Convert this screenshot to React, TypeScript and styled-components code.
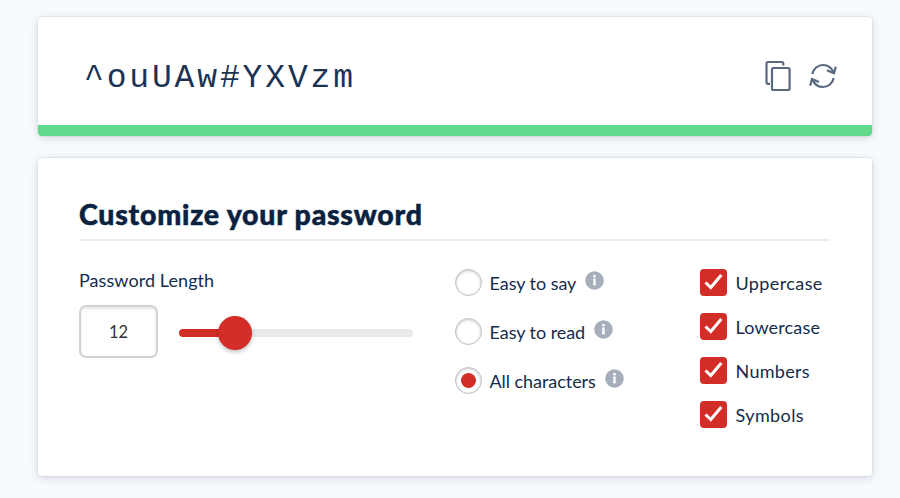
import React, { useState } from "react";
import styled, { createGlobalStyle, css } from "styled-components";

const GlobalStyle = createGlobalStyle`
  *, *::before, *::after { box-sizing: border-box; }
  body {
    margin: 0;
    background: #f7fbff;
    color: #142c4c;
    font-family: Lato, "Open Sans", sans-serif;
    -webkit-font-smoothing: antialiased;
  }
`;

const Page = styled.main`
  display: flex;
  flex-direction: column;
  gap: 22px;
  height: 498px;
  padding: 17px 28px 22px 38px;
  overflow: hidden;
`;

const cardSurface = css`
  background: #fff;
  border-radius: 4px;
  box-shadow: 0 0 0 1px rgba(0, 0, 0, 0.04), 0 2px 10px rgba(0, 0, 0, 0.15);
`;

const ResultCard = styled.section`
  ${cardSurface}
  display: flex;
  flex-direction: column;
  height: 119px;
  overflow: hidden;
`;

const ResultRow = styled.div`
  display: flex;
  align-items: center;
  justify-content: space-between;
  flex: 1;
  padding: 10px 35.500px 0 46px;
`;

const Password = styled.output`
  padding-top: 5px;
  font: 400 33px/40px "Liberation Mono", monospace;
  letter-spacing: 2.850px;
  color: #1b3354;
`;

const Strength = styled.div`
  height: 11px;
  background: #5fd98a;
`;

const Actions = styled.div`
  display: flex;
  align-items: center;
  gap: 17px;
`;

const IconButton = styled.button`
  display: flex;
  padding: 0;
  border: 0;
  background: none;
  color: #59697f;
`;

const OptionsCard = styled.section`
  ${cardSurface}
  height: 318px;
  padding: 37px 42px 0 41px;
`;

const Title = styled.h1`
  height: 46px;
  margin: 0;
  border-bottom: 2px solid #ececec;
  color: #0a2240;
  font-size: 28.5px;
  font-weight: 900;
  line-height: 38px;
  letter-spacing: 0.75px;
  white-space: nowrap;
  -webkit-text-stroke: 0.5px #0a2240;
`;

const Columns = styled.div`
  display: grid;
  grid-template-columns: 375.500px 245.500px 1fr;
`;

const LengthColumn = styled.div`
  padding-top: 27px;
`;

const Label = styled.span<{ $spacing?: number }>`
  font-size: 18px;
  line-height: 24px;
  letter-spacing: ${(p) => p.$spacing ?? 0}px;
  white-space: nowrap;
`;

const LengthRow = styled.div`
  display: flex;
  align-items: center;
  gap: 21px;
  margin-top: 13px;
`;

const LengthInput = styled.input`
  width: 79px;
  height: 53px;
  padding: 0;
  border: 2px solid #d2d2d2;
  border-radius: 7px;
  box-shadow: inset 0 2px 3px rgba(0, 0, 0, 0.1);
  color: #333;
  font: 400 16.500px Lato, sans-serif;
  text-align: center;
`;

const Slider = styled.div`
  display: flex;
  align-items: center;
  width: 234px;
  height: 34px;
  margin-top: 2px;
`;

const Fill = styled.div`
  width: 48px;
  height: 8px;
  margin-right: -9px;
  border-radius: 4px 0 0 4px;
  background: #d32d27;
`;

const Thumb = styled.div`
  z-index: 1;
  width: 34px;
  height: 34px;
  border-radius: 50%;
  background: #d32d27;
  box-shadow: 0 2px 4px rgba(0, 0, 0, 0.25);
`;

const Rest = styled.div`
  flex: 1;
  height: 8px;
  margin-left: -9px;
  border-radius: 0 4px 4px 0;
  background: #e9e9e9;
`;

const RadioColumn = styled.div`
  display: flex;
  flex-direction: column;
  gap: 22px;
  padding-top: 28px;
`;

const CheckColumn = styled.div`
  display: flex;
  flex-direction: column;
  gap: 17px;
  padding-top: 28px;
`;

const Option = styled.label<{ $gap: number }>`
  display: flex;
  align-items: center;
  gap: ${(p) => p.$gap}px;
  height: 27px;
`;

const Radio = styled.span<{ $checked: boolean }>`
  display: grid;
  place-items: center;
  width: 27px;
  height: 27px;
  border: 1.5px solid #b9bdc2;
  border-radius: 50%;
  box-shadow: inset 0 1px 3px rgba(0, 0, 0, 0.22);

  &::after {
    content: "";
    width: 15px;
    height: 15px;
    border-radius: 50%;
    background: ${(p) => (p.$checked ? "#d32d27" : "transparent")};
  }
`;

const CheckBox = styled.span`
  display: grid;
  place-items: center;
  width: 26.500px;
  height: 26.500px;
  border-radius: 4px;
  background: #d32d27;
`;

const Info = styled.svg`
  width: 19px;
  height: 19px;
  margin: -4px 0 0 1px;
`;

const HiddenInput = styled.input`
  position: absolute;
  opacity: 0;
  pointer-events: none;
`;

const CopyIcon = () => (
  <svg width="28" height="32" viewBox="0 0 28 32" fill="none" stroke="currentColor" strokeWidth="2.200">
    <path d="M19.300 5.500V3.500Q19.300 2 17.800 2H4Q2.500 2 2.500 3.500V22.300Q2.500 23.800 4 23.800H6" />
    <rect x="8" y="8" width="17.600" height="22" rx="1.500" />
  </svg>
);

const RefreshIcon = () => (
  <svg width="28" height="26" viewBox="0 0 28 26" fill="none" stroke="currentColor" strokeWidth="2.200">
    <path d="M3.300 11C4.400 5.600 8.800 2 14 2C19 2 22.700 5 24.500 9.500" />
    <path d="M26.800 3.800L25 10.300L18 7.300" />
    <path d="M24.700 15C23.600 20.400 19.200 24 14 24C9 24 5.300 21 3.500 16.500" />
    <path d="M1.200 22.800L3 15.900L10 18.900" />
  </svg>
);

const InfoIcon = () => (
  <Info viewBox="0 0 19 19">
    <circle cx="9.500" cy="9.500" r="9.300" fill="#a7aebb" />
    <circle cx="9.500" cy="5.200" r="1.350" fill="#fff" />
    <path d="M8 7.500H10.600V13H11V14.200H8V13H8.300V8.700H8Z" fill="#fff" />
  </Info>
);

const CheckIcon = () => (
  <svg width="27" height="27" viewBox="0 0 27 27" fill="none">
    <path d="M5.500 13.500L10.800 18.500L21.300 6" stroke="#fff" strokeWidth="3" />
  </svg>
);

const modes = ["Easy to say", "Easy to read", "All characters"];

const characterSets = [
  { name: "Uppercase", spacing: 0.4 },
  { name: "Lowercase", spacing: 0.15 },
  { name: "Numbers", spacing: 0.3 },
  { name: "Symbols", spacing: 0.4 },
];

export default function App() {
  const [mode, setMode] = useState("All characters");
  return (
    <>
      <GlobalStyle />
      <Page>
        <ResultCard>
          <ResultRow>
            <Password>^ouUAw#YXVzm</Password>
            <Actions>
              <IconButton aria-label="Copy password"><CopyIcon /></IconButton>
              <IconButton aria-label="Generate password"><RefreshIcon /></IconButton>
            </Actions>
          </ResultRow>
          <Strength />
        </ResultCard>
        <OptionsCard>
          <Title>Customize your password</Title>
          <Columns>
            <LengthColumn>
              <Label $spacing={0.07}>Password Length</Label>
              <LengthRow>
                <LengthInput aria-label="Password length" defaultValue="12" />
                <Slider><Fill /><Thumb /><Rest /></Slider>
              </LengthRow>
            </LengthColumn>
            <RadioColumn>
              {modes.map((name) => (
                <Option key={name} $gap={8}>
                  <HiddenInput type="radio" name="mode" checked={mode === name} onChange={() => setMode(name)} />
                  <Radio $checked={mode === name} />
                  <Label $spacing={-0.05}>{name}</Label>
                  <InfoIcon />
                </Option>
              ))}
            </RadioColumn>
            <CheckColumn>
              {characterSets.map(({ name, spacing }) => (
                <Option key={name} $gap={9}>
                  <CheckBox><CheckIcon /></CheckBox>
                  <Label $spacing={spacing}>{name}</Label>
                </Option>
              ))}
            </CheckColumn>
          </Columns>
        </OptionsCard>
      </Page>
    </>
  );
}
